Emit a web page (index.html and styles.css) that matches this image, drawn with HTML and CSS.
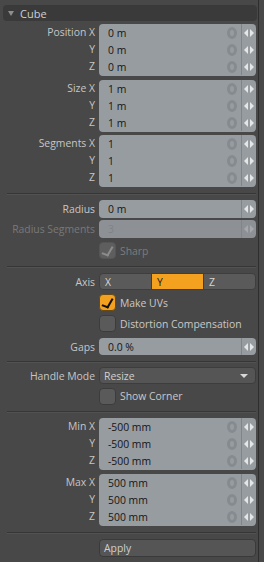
FILE: index.html
```html
<!DOCTYPE html>
<html lang="en">

<head>
  <meta charset="UTF-8">
  <meta name="viewport" content="width=device-width, initial-scale=1.0">
  <title>Cube properties</title>
  <link rel="stylesheet" href="styles.css">
</head>

<body>
  <div class="panel">
    <div class="header"><span class="tri"></span>Cube</div>

    <!-- position -->
    <div class="group first">
      <div class="labels"><div>Position X</div><div>Y</div><div>Z</div></div>
      <div class="field multi">
        <span class="val">0 m</span><span class="zero"></span><span class="arr"></span>
        <span class="val">0 m</span><span class="zero"></span><span class="arr"></span>
        <span class="val">0 m</span><span class="zero"></span><span class="arr"></span>
      </div>
    </div>

    <!-- size -->
    <div class="group">
      <div class="labels"><div>Size X</div><div>Y</div><div>Z</div></div>
      <div class="field multi">
        <span class="val">1 m</span><span class="zero"></span><span class="arr"></span>
        <span class="val">1 m</span><span class="zero"></span><span class="arr"></span>
        <span class="val">1 m</span><span class="zero"></span><span class="arr"></span>
      </div>
    </div>

    <!-- segments -->
    <div class="group tight">
      <div class="labels"><div>Segments X</div><div>Y</div><div>Z</div></div>
      <div class="field multi">
        <span class="val">1</span><span class="zero"></span><span class="arr"></span>
        <span class="val">1</span><span class="zero"></span><span class="arr"></span>
        <span class="val">1</span><span class="zero"></span><span class="arr"></span>
      </div>
    </div>

    <div class="sep"></div>

    <div class="row">
      <div class="label">Radius</div>
      <div class="field single"><span class="val">0 m</span><span class="arr"></span></div>
    </div>
    <div class="row mt2">
      <div class="label off">Radius Segments</div>
      <div class="field single disabled"><span class="val">3</span><span class="arr"></span></div>
    </div>
    <div class="row mt3 tall">
      <div class="label"></div>
      <div class="check disabled"><span class="box"></span>Sharp</div>
    </div>

    <div class="sep"></div>

    <div class="row short">
      <div class="label">Axis</div>
      <div class="seg">
        <span>X</span><span class="on">Y</span><span>Z</span>
      </div>
    </div>
    <div class="row mt4 short">
      <div class="label"></div>
      <div class="check on"><span class="box"></span>Make UVs</div>
    </div>
    <div class="row mt4 short">
      <div class="label"></div>
      <div class="check"><span class="box"></span>Distortion Compensation</div>
    </div>
    <div class="row mt6 short">
      <div class="label">Gaps</div>
      <div class="field single"><span class="val">0.0 %</span><span class="arr"></span></div>
    </div>

    <div class="sep short"></div>

    <div class="row short">
      <div class="label">Handle Mode</div>
      <div class="drop">Resize<span class="down"></span></div>
    </div>
    <div class="row mt3">
      <div class="label"></div>
      <div class="check"><span class="box"></span>Show Corner</div>
    </div>

    <div class="sep"></div>

    <!-- min -->
    <div class="group snug">
      <div class="labels"><div>Min X</div><div>Y</div><div>Z</div></div>
      <div class="field multi">
        <span class="val">-500 mm</span><span class="zero"></span><span class="arr"></span>
        <span class="val">-500 mm</span><span class="zero"></span><span class="arr"></span>
        <span class="val">-500 mm</span><span class="zero"></span><span class="arr"></span>
      </div>
    </div>

    <!-- max -->
    <div class="group">
      <div class="labels"><div>Max X</div><div>Y</div><div>Z</div></div>
      <div class="field multi">
        <span class="val">500 mm</span><span class="zero"></span><span class="arr"></span>
        <span class="val">500 mm</span><span class="zero"></span><span class="arr"></span>
        <span class="val">500 mm</span><span class="zero"></span><span class="arr"></span>
      </div>
    </div>

    <div class="sep"></div>

    <div class="row">
      <div class="label"></div>
      <button type="button" class="btn">Apply</button>
    </div>
  </div>
</body>

</html>
```

FILE: styles.css
```css
* {
  padding: 0;
  margin: 0;
  box-sizing: border-box;
}

body {
  background-color: #484848;
  font-family: "Open Sans", "Liberation Sans", sans-serif;
  font-size: 10.4px;
  color: #c6c6c6;
  width: 264px;
  height: 562px;
  overflow: hidden;
}

.panel {
  width: 259px;
  height: 562px;
  border-right: 1px solid #2e2e2e;
  padding-top: 5px;
}

.header {
  height: 16px;
  margin: 0 1px 0 3px;
  background-color: #3a3a3a;
  border-radius: 4px;
  display: flex;
  align-items: center;
  padding-left: 5px;
  gap: 6px;
  color: #cfcfcf;
  font-size: 11px;
}

.header>.tri {
  width: 0;
  height: 0;
  border-left: 3px solid transparent;
  border-right: 3px solid transparent;
  border-top: 5px solid #8e8e8e;
}

/* label + control rows */
.row,
.group {
  display: flex;
  height: 18px;
}

.group {
  height: 52px;
  margin-top: 4px;
}

.group.first {
  margin-top: 3px;
}

.group.tight {
  margin-top: 3px;
}

.group.snug {
  margin-top: 0;
}

.row.short {
  height: 17px;
}

.row.tall {
  height: 19px;
}

.mt2 {
  margin-top: 2px;
}

.mt3 {
  margin-top: 3px;
}

.mt4 {
  margin-top: 4px;
}

.mt6 {
  margin-top: 6px;
}

.label,
.labels {
  width: 99px;
  flex-shrink: 0;
  padding-right: 4px;
  text-align: right;
  display: flex;
  align-items: center;
  justify-content: flex-end;
}

.labels {
  flex-direction: column;
  align-items: flex-end;
  justify-content: flex-start;
}

.labels>div {
  height: 17px;
  line-height: 17px;
}

.label.off {
  color: #787878;
}

.sep {
  margin: 6px 2px 5px 7px;
  height: 2px;
  border-top: 1px solid #363636;
  border-bottom: 1px solid #525252;
}

.sep.short {
  margin-bottom: 4px;
}

/* numeric fields */
.field {
  width: 157px;
  background-color: #979ca1;
  border-radius: 4px;
  color: #151515;
  display: grid;
  grid-template-columns: 1fr 15px 15px;
  align-items: center;
}

.field.multi {
  grid-auto-rows: 17px;
  padding-bottom: 1px;
}

.field.single {
  grid-template-columns: 1fr 15px;
}

.field.disabled {
  background-color: #8d9196;
  color: #7e8388;
}

.field .val {
  padding-left: 9px;
}

.field .zero {
  justify-self: center;
  width: 10px;
  height: 12px;
  border: 3px solid #868b90;
  border-radius: 50%;
  margin-left: -4px;
}

.field .arr {
  height: 100%;
  border-left: 1px solid #80858a;
  position: relative;
}

.field .arr::before,
.field .arr::after {
  content: "";
  position: absolute;
  top: 50%;
  margin-top: -4px;
  border-top: 4px solid transparent;
  border-bottom: 4px solid transparent;
}

.field .arr::before {
  left: 2px;
  border-right: 4px solid #e4e6e8;
}

.field .arr::after {
  left: 8px;
  border-left: 4px solid #e4e6e8;
}

.field.disabled .arr::before {
  border-right-color: #a5a9ad;
}

.field.disabled .arr::after {
  border-left-color: #a5a9ad;
}

/* segmented axis */
.seg {
  width: 157px;
  display: flex;
  background-color: #5a5a5a;
  border: 1px solid #3e3e3e;
  border-radius: 4px;
  overflow: hidden;
}

.seg>span {
  flex: 1;
  display: flex;
  align-items: center;
  padding-left: 5px;
  color: #d6d6d6;
}

.seg>span.on {
  background-color: #f3a11e;
  color: #1a1a1a;
  border-left: 1px solid #3e3e3e;
  border-right: 1px solid #3e3e3e;
}

/* checkboxes */
.check {
  display: flex;
  align-items: center;
  gap: 4px;
  color: #c8c8c8;
}

.check>.box {
  width: 17px;
  height: 17px;
  border-radius: 4px;
  background-color: #5a5a5a;
  border: 1px solid #3c3c3c;
  position: relative;
}

.check.on>.box {
  background-color: #f3a11e;
  border-color: #6a4a14;
}

.check.on>.box::after,
.check.disabled>.box::after {
  content: "";
  position: absolute;
  left: 4px;
  top: 2px;
  width: 5px;
  height: 9px;
  border-right: 2px solid #111;
  border-bottom: 2px solid #111;
  transform: rotate(30deg) skewY(-10deg);
}

.check.disabled {
  color: #7c7c7c;
}

.check.disabled>.box {
  background-color: #5e5e5e;
  border-color: #555;
}

.check.disabled>.box::after {
  border-color: #8c8c8c;
}

/* dropdown and button */
.drop {
  width: 157px;
  background-color: #555;
  border: 1px solid #3d3d3d;
  border-radius: 4px;
  display: flex;
  align-items: center;
  justify-content: space-between;
  padding: 0 7px 0 4px;
  color: #d0d0d0;
}

.drop>.down {
  width: 0;
  height: 0;
  border-left: 4px solid transparent;
  border-right: 4px solid transparent;
  border-top: 4px solid #d8d8d8;
}

.btn {
  width: 157px;
  background-color: #555;
  border: 1px solid #3a3a3a;
  border-radius: 4px;
  font-family: inherit;
  font-size: 10.4px;
  color: #cfcfcf;
  text-align: left;
  padding-left: 4px;
}
```
